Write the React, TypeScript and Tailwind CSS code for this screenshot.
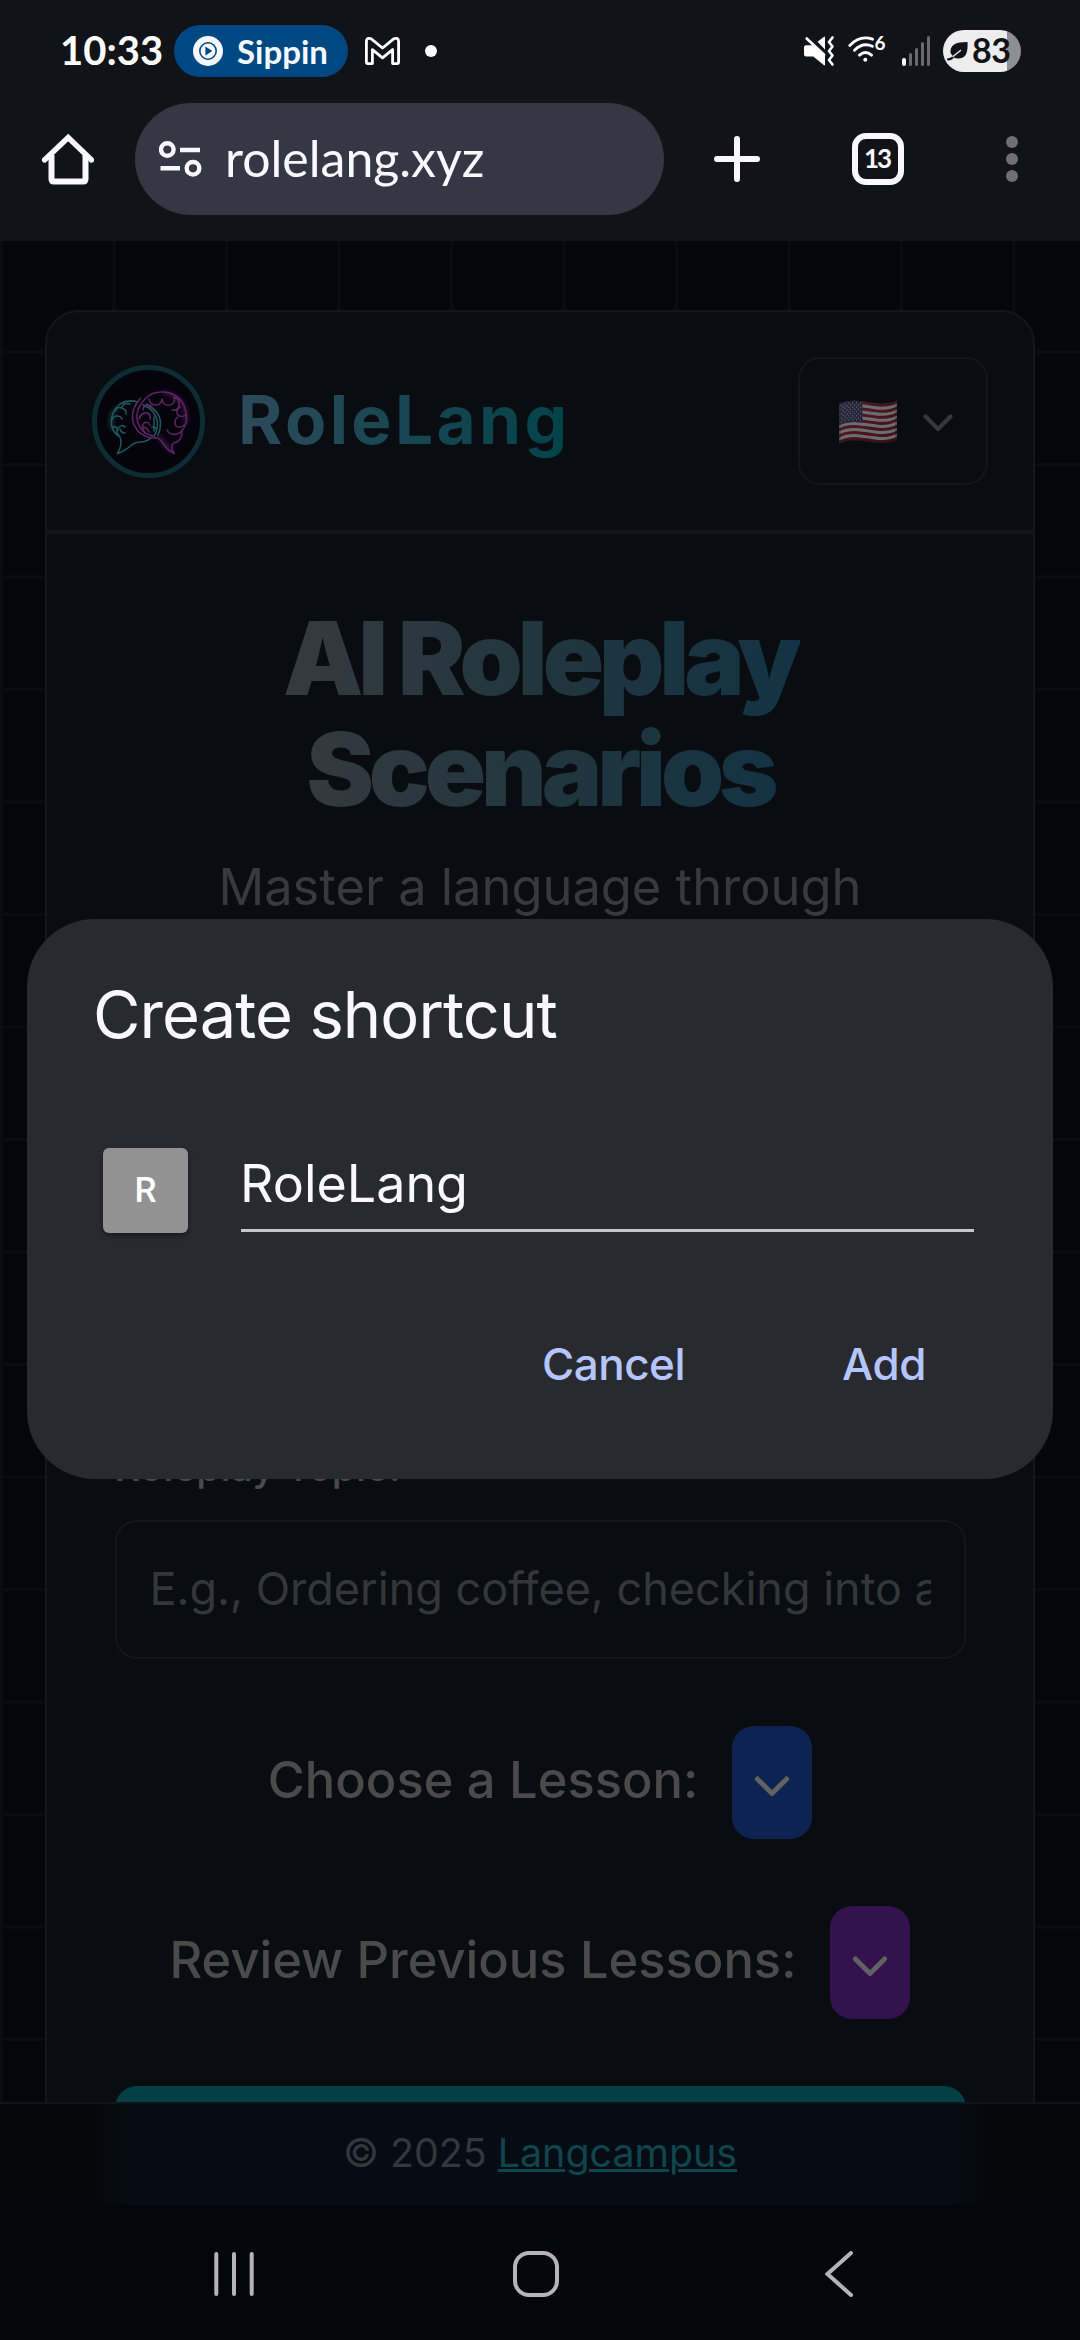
import React from "react";

function StatusBar() {
  return (
    <div className="flex h-[102px] items-center pl-[60px] pr-[59px] text-white">
      <div className="w-[114px] pb-[2px] font-['Lato',sans-serif] text-[40px] font-bold leading-none">10:33</div>
      <div className="flex h-[52px] w-[174px] items-center gap-[14px] rounded-full bg-[#004883] pl-[19px]">
        <svg className="h-[30px] w-[30px]" viewBox="0 0 30 30" fill="none">
          <circle cx="15" cy="15" r="15" fill="#f5f9ff" />
          <circle cx="15" cy="15" r="8.2" stroke="#004883" strokeWidth="1.6" />
          <path d="M12.4 10.6v8.8l7-4.4z" fill="#004883" />
        </svg>
        <span className="font-['Lato',sans-serif] text-[33px] font-bold leading-none text-[#f5f9ff]">Sippin</span>
      </div>
      <svg className="ml-[17px] h-[28px] w-[35px]" viewBox="0 0 35 28" fill="none" stroke="white" strokeWidth="2.8" strokeLinejoin="round">
        <path d="M4.6 1.4Q1.4 1 1.4 4.5V25q0 1.600 1.600 1.600h4.400V12.600l10.100 8.300 10.100-8.300v14H32q1.600 0 1.600-1.600V4.500Q33.600 1 30.400 1.400q-1 0-2 .8L17.500 11 6.600 2.200q-1-.8-2-.8z" />
      </svg>
      <div className="ml-[25px] h-3 w-3 rounded-full bg-white" />

      <svg className="ml-auto h-[30px] w-[30px]" viewBox="0 0 30 30" fill="white">
        <path d="M2 9.300H9.300L21 20V28.500q0 1.500-1.300.6L9.300 20.500H2Q0 20.500 0 18.500V11.300Q0 9.300 2 9.300z" />
        <path d="M13.500 5.800L20 .8q1-.6 1 .6V13.500z" />
        <path d="M2.700 2.600L20 18.800" stroke="white" strokeWidth="2.800" strokeLinecap="round" />
        <path d="M28.500 1.500L25 6l3.500 4.500L25 15l3.500 4.500L25 24l3.500 4.500" fill="none" stroke="white" strokeWidth="2.600" strokeLinecap="round" strokeLinejoin="round" />
      </svg>
      <svg className="ml-[14px] h-[30px] w-[38px] overflow-visible" viewBox="0 0 38 30" fill="none" stroke="white" strokeWidth="2.900" strokeLinecap="round">
        <path d="M1.800 9.500Q12 -1.300 24.500 3.200" />
        <path d="M6.500 14.300Q15 5.900 24.300 10.300" />
        <path d="M11.500 19.100q6-5.200 12 0" />
        <circle cx="17.300" cy="23.700" r="2" fill="white" stroke="none" />
        <text x="26.500" y="14" fill="white" stroke="none" fontSize="19" fontWeight="700" fontFamily="Lato, sans-serif">6</text>
      </svg>
      <div className="ml-[16px] flex h-[30px] w-[28px] items-end justify-between">
        <div className="h-[8px] w-[4px] rounded-sm bg-white" />
        <div className="h-[13px] w-[3.5px] rounded-sm bg-[#6a6a6e]" />
        <div className="h-[18px] w-[3.5px] rounded-sm bg-[#6a6a6e]" />
        <div className="h-[24px] w-[3.5px] rounded-sm bg-[#6a6a6e]" />
        <div className="h-[30px] w-[3.5px] rounded-sm bg-[#6a6a6e]" />
      </div>
      <div className="ml-[13px] flex h-[42px] w-[78px] items-center rounded-full bg-[linear-gradient(90deg,#ededed_64px,#8f8f91_64px)] pl-[4px] text-[#121318]">
        <svg className="h-[20px] w-[22px]" viewBox="0 0 22 20">
          <path d="M3.500 12C3 4 8 1 20.500 1 21 9 20 17.500 12 17.500q-3.500.2-5.500-1.500z" fill="#121318" />
          <path d="M1 18.300Q4 18.500 7 15.500" stroke="#121318" strokeWidth="2.200" strokeLinecap="round" fill="none" />
          <path d="M6 15.500L13.500 9.500" stroke="#ededed" strokeWidth="1.500" strokeLinecap="round" />
        </svg>
        <span className="ml-[3px] pb-[2px] font-['Lato',sans-serif] text-[34px] font-bold leading-none tracking-[-0.5px]">83</span>
      </div>
    </div>
  );
}

function Toolbar() {
  return (
    <div className="mt-px flex h-[112px] items-center pl-[42px]">
      <svg className="h-[52px] w-[52px]" viewBox="0 0 52 52" fill="none" stroke="#faf8ff" strokeWidth="6" strokeLinejoin="round">
        <path d="M9.500 22V46q0 2.500 2.500 2.500H41q2.500 0 2.500-2.500V22" />
        <path d="M2.500 27L26.200 4.600 49.500 27" strokeLinejoin="miter" strokeLinecap="round" strokeWidth="5.400" />
      </svg>
      <div className="ml-[41px] flex h-[112px] w-[529px] items-center rounded-full bg-[#353745] pl-[24px]">
        <svg className="h-[38px] w-[44px]" viewBox="0 0 44 38" fill="none" stroke="#faf8ff" strokeWidth="4.400">
          <circle cx="8.300" cy="9.500" r="6.300" />
          <path d="M21 10h20M1.500 28.300h19.500" />
          <circle cx="34" cy="28.300" r="6.300" />
        </svg>
        <span className="ml-[22px] pb-[2px] font-['Lato',sans-serif] text-[50px] leading-none text-[#faf8ff]">rolelang.xyz</span>
      </div>
      <svg className="ml-[50px] h-[46px] w-[46px]" viewBox="0 0 46 46" stroke="#faf8ff" strokeWidth="6" strokeLinecap="round">
        <path d="M23 3v40M3 23h40" />
      </svg>
      <div className="ml-[92px] flex h-[52px] w-[52px] items-center justify-center rounded-[14px] border-[6px] border-[#faf8ff] pb-[2px] font-['Lato',sans-serif] text-[26px] font-bold leading-none tracking-[-2px] text-[#faf8ff]">
        <span className="pr-[2px]">13</span>
      </div>
      <div className="ml-[102px] flex flex-col gap-[5px]">
        <div className="h-3 w-3 rounded-full bg-[#6f6e74]" />
        <div className="h-3 w-3 rounded-full bg-[#6f6e74]" />
        <div className="h-3 w-3 rounded-full bg-[#6f6e74]" />
      </div>
    </div>
  );
}

function BrainLogo() {
  return (
    <svg className="h-[103px] w-[103px]" viewBox="5 5 103 103" fill="none" strokeLinecap="round" strokeLinejoin="round">
      <defs>
        <filter id="glow" x="-40%" y="-40%" width="180%" height="180%">
          <feGaussianBlur stdDeviation="2.500" />
        </filter>
      </defs>
      <g filter="url(#glow)" opacity="0.7">
        <path d="M20 64Q17 52 24 43" stroke="#2c6464" strokeWidth="3" />
        <path d="M72 28Q92 32 94 50V58" stroke="#6a2a70" strokeWidth="3" />
        <path d="M67 72L79 86" stroke="#6a2a70" strokeWidth="3" />
      </g>
      <g stroke="#1f5a60" strokeWidth="1.500">
        <path d="M46 37Q36 34 28 39Q18 47 19.500 60Q21 68 28 72Q31 79 25.300 88.700Q33 86 41 79Q46 76.500 50 77Q56 76 60 72" />
        <path d="M51 40Q64 45 65.500 58Q65.500 66 62 71M54 39Q68 46 68.500 58Q68.500 65 66 70" />
        <path d="M23 46q2-5 7-3q5 2 4 6M30 42q2-5 8-3M20 55q1-4 5-4q4 0 5 3M20 62q5-1 6 3M27 71q-4-6 0-9q4-3 6 0M33 68q-4 0-5-4M62 52v14M60 62q3-1 4 2" />
      </g>
      <g stroke="#5f2468" strokeWidth="1.500">
        <path d="M48.500 33Q38 45 41 57Q46 72 62 73Q67 72 70 77Q75 85 82.300 88.700Q78 82 81.500 78Q90 77 90 66Q96 58 94 48Q91 29 72 27Q60 26 53 34Q44 43 45 54Q48 69 62 71" />
        <path d="M57 34q1 6 7 6q5 0 6-6q1 7 8 6q6-2 4-8q8 3 4 11q-2 3-6 2M51 45q0-4 5-5q4 0 5 4M88 42q-5 3-2 8q4 3 8 0M86 52q-5 4-2 9q4 3 8-1M75 65q3 6 10 4q4-1 5-4M47 54q2-7 8-6q4 1 3 6M52 66q-3-5 0-8q4-2 6 2M50 62q5 0 7 5" />
      </g>
    </svg>
  );
}

function Chevron({ className }: { className: string }) {
  return (
    <svg className={className} viewBox="0 0 30 18" fill="none" stroke="currentColor" strokeWidth="4.200" strokeLinecap="round" strokeLinejoin="round">
      <path d="M2.500 2.500L15 15 27.500 2.500" />
    </svg>
  );
}

function LessonRow({ label, button }: { label: string; button: string }) {
  return (
    <div className="mt-[67px] flex h-[113px] items-center justify-center gap-[34px]">
      <span className="whitespace-nowrap pb-[3px] text-[50.625px] font-medium leading-none text-[#4a4a4b]">{label}</span>
      <div className={button}>
        <Chevron className="mt-[8px] h-[21px] w-[36px] text-[#626260]" />
      </div>
    </div>
  );
}

function RoleLangPage() {
  return (
    <main className="h-[1861px] overflow-hidden bg-[#05060b] bg-[linear-gradient(90deg,#0b0c11_2.8px,transparent_2.8px),linear-gradient(180deg,#0b0c11_2.8px,transparent_2.8px)] bg-[length:112.5px_112.5px] bg-[position:0_-3px] px-[45px] pt-[69px] font-['Inter',sans-serif]">
      <div className="h-[2000px] rounded-[34px] border-2 border-[#13171b] bg-[#090d11]">
        <header className="flex h-[222px] items-center border-b-[4px] border-[#12161b] px-[45px]">
          <div className="h-[113px] w-[113px] shrink-0 overflow-hidden rounded-full border-[5px] border-[#0e2c33] bg-[#05030b]">
            <BrainLogo />
          </div>
          <div className="ml-[33px] bg-[linear-gradient(90deg,#2d4a5a,#03434a)] bg-clip-text pb-[2px] text-[67.5px] font-bold leading-[80px] tracking-[0.05em] text-transparent">RoleLang</div>
          <div className="ml-auto flex h-[128px] w-[190px] items-center rounded-[22px] border-2 border-[#13171b] pl-[37px]">
            <span className="w-[62px] font-['Inter','Noto_Color_Emoji',sans-serif] text-[50px] leading-none opacity-40">🇺🇸</span>
            <Chevron className="ml-[24px] mt-[3px] h-[18px] w-[30px] text-[#35383d]" />
          </div>
        </header>
        <div className="flex flex-col items-center px-[67.5px]">
          <h1 className="mt-[69px] bg-[linear-gradient(90deg,#363a40,#21363e_50%,#133344)] bg-clip-text px-[3px] text-center text-[101.25px] font-black leading-[111.375px] tracking-[-0.05em] text-transparent">
            AI Roleplay
            <br />
            Scenarios
          </h1>
          <p className="mt-[21px] whitespace-nowrap text-[50.625px] leading-[79px] text-[#36393d]">Master a language through</p>
        </div>
        <div className="mt-[513px] flex flex-col px-[67.5px]">
          <label className="text-[39.375px] font-medium leading-[56px] text-[#4a4a4b]">Roleplay Topic:</label>
          <div className="mt-[25px] h-[139px] rounded-[22px] border-2 border-[#13171b] px-[33px]">
            <div className="overflow-hidden whitespace-nowrap text-[45px] leading-[134px] text-[#34373a]">E.g., Ordering coffee, checking into a hotel</div>
          </div>
          <LessonRow label="Choose a Lesson:" button="flex h-[113px] w-[80px] items-center justify-center rounded-[22px] bg-[#0d2453]" />
          <LessonRow label="Review Previous Lessons:" button="flex h-[113px] w-[80px] items-center justify-center rounded-[22px] bg-[#33124f]" />
          <div className="mt-[67px] h-[146px] rounded-[22px] bg-[#034046]" />
        </div>
      </div>
    </main>
  );
}

function PageFooter() {
  return (
    <footer className="flex h-[103px] items-center justify-center border-t-2 border-[#11151a] bg-[linear-gradient(90deg,#05070b_98px,#060c13_128px,#060c13_953px,#05070b_983px)] pb-[4px] font-['Inter',sans-serif] text-[39.375px] leading-none text-[#34373b]">
      <p>
        © 2025 <a className="text-[#0f464e] underline decoration-[3px]">Langcampus</a>
      </p>
    </footer>
  );
}

function NavBar() {
  return (
    <nav className="flex h-[135px] items-center bg-[#05060b] pl-[214px] pt-[3px]">
      <svg className="h-[44px] w-[40px]" viewBox="0 0 40 44" stroke="#b4b4b8" strokeWidth="4" strokeLinecap="round">
        <path d="M2.300 2v40M20 2v40M37.700 2v40" />
      </svg>
      <div className="ml-[259px] h-[46px] w-[46px] rounded-[16px] border-[4px] border-[#b4b4b8]" />
      <svg className="ml-[266px] h-[46px] w-[28px]" viewBox="0 0 28 46" fill="none" stroke="#b4b4b8" strokeWidth="4" strokeLinecap="round">
        <path d="M26 2L2.500 23 26 44" />
      </svg>
    </nav>
  );
}

function ShortcutDialog() {
  return (
    <div role="dialog" className="absolute left-[27px] top-[919px] h-[560px] w-[1026px] rounded-[68px] bg-[#292a2f] pt-[56px] font-['Inter',sans-serif] text-[#faf8ff]">
      <h2 className="pl-[66px] text-[65px] leading-[80px] tracking-[-0.9px]">Create shortcut</h2>
      <div className="mt-[93px] flex pl-[76px]">
        <div className="flex h-[85px] w-[85px] items-center justify-center rounded-[6px] bg-[#929292] pt-[2px] font-['Roboto',sans-serif] text-[35px] font-medium text-white shadow-[0_3px_5px_rgba(0,0,0,0.35)]">R</div>
        <div className="ml-[53px] h-[84px] w-[733px] border-b-[3px] border-[#c4c6d0] text-[52px] leading-[72px] tracking-[0px] -indent-[1px]">RoleLang</div>
      </div>
      <div className="mt-[101px] flex pl-[515px] text-[44px] font-medium leading-[60px] text-[#b4c5ff]">
        <span className="w-[300px] tracking-[-0.5px]">Cancel</span>
        <span className="tracking-[-0.4px]">Add</span>
      </div>
    </div>
  );
}

export default function App() {
  return (
    <div className="relative flex h-[2340px] w-[1080px] flex-col overflow-hidden bg-[#05060b]">
      <div className="h-[241px] bg-[#121318]">
        <StatusBar />
        <Toolbar />
      </div>
      <RoleLangPage />
      <PageFooter />
      <NavBar />
      <ShortcutDialog />
    </div>
  );
}
